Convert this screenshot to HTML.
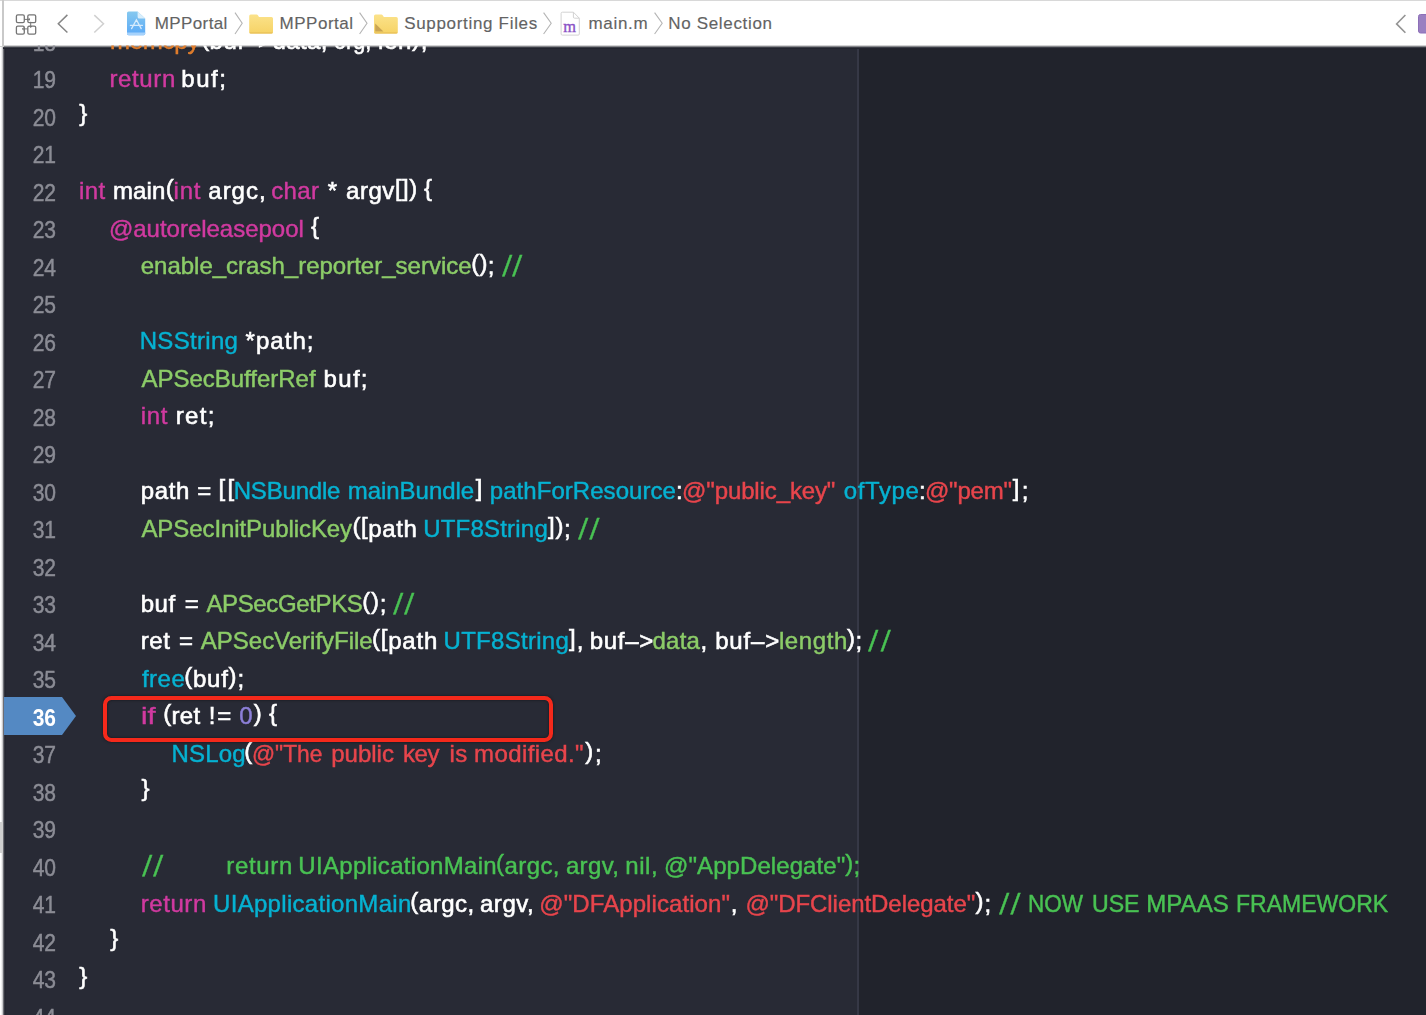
<!DOCTYPE html>
<html><head><meta charset="utf-8"><title>main.m</title>
<style>
html,body{margin:0;padding:0}
body{width:1426px;height:1015px;overflow:hidden;background:#fff;position:relative;font-family:"Liberation Sans",sans-serif}
#ed{position:absolute;left:3px;top:46px;width:1423px;height:969px;background:#282a35;overflow:hidden}
#edl{position:absolute;left:1.2px;top:46px;width:4.6px;height:969px;background:linear-gradient(90deg,#fff 0%,#d4d4d6 28%,#6c6d74 50%,#2e303a 72%,#232530 88%,#282a35 100%)}
#tbb{position:absolute;left:3.4px;top:44px;width:1424px;height:4.6px;background:linear-gradient(180deg,#fff 0%,#ececec 22%,#aeaeb0 42%,#55575f 60%,#272933 78%,#22242e 90%,rgba(34,36,46,0) 100%)}
#edr{position:absolute;left:858.6px;top:46px;width:567px;height:969px;background:#21232c}
#guide{position:absolute;left:857.3px;top:46px;width:1.4px;height:969px;background:#363846}
#lines{position:absolute;left:0;top:0;width:1426px;height:1015px;overflow:hidden;filter:blur(0.45px);clip-path:inset(45.6px 0 0 0)}
.ln{position:absolute;left:0;width:1426px;height:37.5px;line-height:37.5px;font-size:24px;white-space:pre}
.num{position:absolute;left:16.4px;width:40px;text-align:right;color:#8b8c95;font-size:24px;transform:scaleX(.875);transform-origin:100% 50%;top:1.6px;-webkit-text-stroke:0.5px}
.t{position:absolute;top:0;transform-origin:0 50%;-webkit-text-stroke:0.45px}
.k{color:#d13aa0}.g{color:#8ccc68}.c{color:#49c253}.b{color:#06b2d2}.s{color:#e8454c}.n{color:#8c7fd8}.o{color:#e07d2c}.w{color:#fff;-webkit-text-stroke:0.6px}
.br{position:relative;top:-2.7px}.us{position:relative;top:-1.5px}
.cur .num{color:#fff;font-weight:bold;-webkit-text-stroke:0}
#bp{position:absolute;left:3.5px;top:697px;width:72px;height:38px}
#redbox{position:absolute;left:103.2px;top:696px;width:441.4px;height:37.6px;border:4.6px solid #f5291b;border-radius:8.5px;box-shadow:0 0 3px rgba(0,0,0,.5), inset 0 0 3px rgba(0,0,0,.5)}
#tb{position:absolute;left:0;top:0;width:1426px;height:44.5px;background:#fff;border-top:1.5px solid #d8d8d8;box-sizing:border-box}
#tbi{position:absolute;left:0;top:0}
#tbl{position:absolute;left:1.9px;top:0;width:1.7px;height:46.5px;background:#c9c9c9}
#tbl2{position:absolute;left:0;top:45.5px;width:3px;height:1px;background:#cfcfcf}
#lgray{position:absolute;left:0;top:822px;width:2.5px;height:31px;background:#cfcfcf}
.cr{position:absolute;top:12.05px;font-size:17px;line-height:24px;color:#636363;white-space:pre;-webkit-text-stroke:0.15px}
</style></head><body>
<div id="ed"></div><div id="edl"></div><div id="edr"></div><div id="guide"></div><div id="tbb"></div>
<svg id="bp" viewBox="0 0 72 38"><path d="M0 0H58L72 19L58 38H0Z" fill="#5489c3"/></svg>
<div id="lines">
<div class="ln" style="top:22.15px"><span class="num">18</span><span class="t o" style="left:110px;letter-spacing:-0.26px">memcpy</span><span class="t w" style="left:201.2px;letter-spacing:0.42px"><span class="br">(</span>buf–&gt;data, </span><span class="t w" style="left:333.6px;transform:scaleX(0.902)">org, </span><span class="t w" style="left:377.9px;letter-spacing:0.675px">len<span class="br">)</span>;</span></div>
<div class="ln" style="top:59.65px"><span class="num">19</span><span class="t k" style="left:109.4px;letter-spacing:0.65px">return </span><span class="t w" style="left:181.3px;letter-spacing:1.533px">buf;</span></div>
<div class="ln" style="top:97.15px"><span class="num">20</span><span class="t w" style="left:79.3px"><span class="br">}</span></span></div>
<div class="ln" style="top:134.65px"><span class="num">21</span></div>
<div class="ln" style="top:172.15px"><span class="num">22</span><span class="t k" style="left:79.1px;letter-spacing:0.425px">int </span><span class="t w" style="left:112.9px;letter-spacing:0.187px">main<span class="br">(</span></span><span class="t k" style="left:173.5px;letter-spacing:0.825px">int </span><span class="t w" style="left:208.3px;letter-spacing:0.987px">argc, </span><span class="t k" style="left:271.2px;letter-spacing:0.383px">char </span><span class="t w" style="left:327.85px">* </span><span class="t w" style="left:346px;letter-spacing:0.55px">argv<span class="br">[])</span> </span><span class="t w" style="left:423.9px"><span class="br">{</span></span></div>
<div class="ln" style="top:209.65px"><span class="num">23</span><span class="t k" style="left:108.9px;letter-spacing:-0.013px">@autoreleasepool </span><span class="t w" style="left:310.95px"><span class="br">{</span></span></div>
<div class="ln" style="top:247.15px"><span class="num">24</span><span class="t g" style="left:140.7px;letter-spacing:-0.002px">enable<span class="us">_</span>crash<span class="us">_</span>reporter<span class="us">_</span>service</span><span class="t w" style="left:471.2px;letter-spacing:0.3px"><span class="br">()</span>; </span><span class="t c" style="left:502.8px;letter-spacing:1.89px;font-size:29px;transform:skewX(-5deg);top:1px">//</span></div>
<div class="ln" style="top:284.65px"><span class="num">25</span></div>
<div class="ln" style="top:322.15px"><span class="num">26</span><span class="t b" style="left:139.7px;letter-spacing:0.314px">NSString </span><span class="t w" style="left:245.5px;letter-spacing:1.06px">*path;</span></div>
<div class="ln" style="top:359.65px"><span class="num">27</span><span class="t g" style="left:141.45px;letter-spacing:-0.015px">APSecBufferRef </span><span class="t w" style="left:323.6px;letter-spacing:1.3px">buf;</span></div>
<div class="ln" style="top:397.15px"><span class="num">28</span><span class="t k" style="left:140.7px;letter-spacing:0.725px">int </span><span class="t w" style="left:175.8px;letter-spacing:1.333px">ret;</span></div>
<div class="ln" style="top:434.65px"><span class="num">29</span></div>
<div class="ln" style="top:472.15px"><span class="num">30</span><span class="t w" style="left:140.7px;letter-spacing:0.65px">path </span><span class="t w" style="left:197.35px">= </span><span class="t w" style="left:218.45px;letter-spacing:2.3px"><span class="br">[[</span></span><span class="t b" style="left:233.7px;letter-spacing:-0.186px">NSBundle </span><span class="t b" style="left:347.7px;letter-spacing:-0.028px">mainBundle</span><span class="t w" style="left:475.77px"><span class="br">]</span> </span><span class="t b" style="left:489.8px;letter-spacing:0.046px">pathForResource</span><span class="t w" style="left:675.97px">:</span><span class="t s" style="left:682.1px;letter-spacing:-0.129px">@"public<span class="us">_</span>key" </span><span class="t b" style="left:843.7px;letter-spacing:0.64px">ofType</span><span class="t w" style="left:918.93px">:</span><span class="t s" style="left:924.9px;letter-spacing:-0.18px">@"pem"</span><span class="t w" style="left:1012.75px;letter-spacing:2.4px"><span class="br">]</span>;</span></div>
<div class="ln" style="top:509.65px"><span class="num">31</span><span class="t g" style="left:141.45px;letter-spacing:-0.085px">APSecInitPublicKey</span><span class="t w" style="left:352.5px;letter-spacing:0.57px"><span class="br">([</span>path </span><span class="t b" style="left:423.15px;letter-spacing:0.211px">UTF8String</span><span class="t w" style="left:548.05px;letter-spacing:0.7px"><span class="br">])</span>; </span><span class="t c" style="left:578.7px;letter-spacing:3.29px;font-size:29px;transform:skewX(-5deg);top:1px">//</span></div>
<div class="ln" style="top:547.15px"><span class="num">32</span></div>
<div class="ln" style="top:584.65px"><span class="num">33</span><span class="t w" style="left:140.7px;letter-spacing:0.55px">buf </span><span class="t w" style="left:184.7px">= </span><span class="t g" style="left:206.45px;letter-spacing:-0.365px">APSecGetPKS</span><span class="t w" style="left:362.3px;letter-spacing:0.75px"><span class="br">()</span>; </span><span class="t c" style="left:394.3px;letter-spacing:2.99px;font-size:29px;transform:skewX(-5deg);top:1px">//</span></div>
<div class="ln" style="top:622.15px"><span class="num">34</span><span class="t w" style="left:140.7px;letter-spacing:0.625px">ret </span><span class="t w" style="left:179.1px">= </span><span class="t g" style="left:200.85px;letter-spacing:-0.018px">APSecVerifyFile</span><span class="t w" style="left:372.1px;letter-spacing:0.75px"><span class="br">([</span>path </span><span class="t b" style="left:443.55px;letter-spacing:0.278px">UTF8String</span><span class="t w" style="left:569.05px;letter-spacing:1px"><span class="br">]</span>, </span><span class="t w" style="left:589.7px;letter-spacing:0.7px">buf–&gt;</span><span class="t g" style="left:652.5px;letter-spacing:0.25px">data</span><span class="t w" style="left:700.58px">, </span><span class="t w" style="left:715.2px;letter-spacing:0.825px">buf–&gt;</span><span class="t g" style="left:778.9px;letter-spacing:0.59px">length</span><span class="t w" style="left:846.95px;letter-spacing:0.45px"><span class="br">)</span>; </span><span class="t c" style="left:869.3px;letter-spacing:4.49px;font-size:29px;transform:skewX(-5deg);top:1px">//</span></div>
<div class="ln" style="top:659.65px"><span class="num">35</span><span class="t b" style="left:141.95px;letter-spacing:0.5px">free</span><span class="t w" style="left:184.2px;letter-spacing:0.76px"><span class="br">(</span>buf<span class="br">)</span>;</span></div>
<div class="ln cur" style="top:697.15px"><span class="num">36</span><span class="t k" style="left:140.7px;transform:scaleX(1.2)">if </span><span class="t w" style="left:163.2px;letter-spacing:0.35px"><span class="br">(</span>ret </span><span class="t w" style="left:208.65px;letter-spacing:1.85px">!= </span><span class="t n" style="left:239.35px">0</span><span class="t w" style="left:253.82px"><span class="br">)</span> </span><span class="t w" style="left:269.05px"><span class="br">{</span></span></div>
<div class="ln" style="top:734.65px"><span class="num">37</span><span class="t b" style="left:171.4px;letter-spacing:0.212px">NSLog</span><span class="t w" style="left:244.32px"><span class="br">(</span></span><span class="t s" style="left:252.2px;transform:scaleX(0.9488)">@"The </span><span class="t s" style="left:331.2px">public </span><span class="t s" style="left:403px;letter-spacing:-0.475px">key </span><span class="t s" style="left:449.6px;letter-spacing:0.2px">is </span><span class="t s" style="left:474px;letter-spacing:0.411px">modified."</span><span class="t w" style="left:585.35px;letter-spacing:1.75px"><span class="br">)</span>;</span></div>
<div class="ln" style="top:772.15px"><span class="num">38</span><span class="t w" style="left:141.5px"><span class="br">}</span></span></div>
<div class="ln" style="top:809.65px"><span class="num">39</span></div>
<div class="ln" style="top:847.15px"><span class="num">40</span><span class="t c" style="left:142.7px;letter-spacing:2.99px;font-size:29px;transform:skewX(-5deg);top:1px">// </span><span class="t c" style="left:226.3px;letter-spacing:0.65px">return </span><span class="t c" style="left:298.35px;letter-spacing:0.306px">UIApplicationMain</span><span class="t c" style="left:496.1px;letter-spacing:0.41px"><span class="br">(</span>argc, </span><span class="t c" style="left:565.9px;letter-spacing:0.35px">argv, </span><span class="t c" style="left:625.2px;letter-spacing:0.6px">nil, </span><span class="t c" style="left:664px;letter-spacing:0.083px">@"AppDelegate"<span class="br">)</span>;</span></div>
<div class="ln" style="top:884.65px"><span class="num">41</span><span class="t k" style="left:140.7px;letter-spacing:0.57px">return </span><span class="t b" style="left:213.05px;letter-spacing:0.3px">UIApplicationMain</span><span class="t w" style="left:410.3px;letter-spacing:0.51px"><span class="br">(</span>argc, </span><span class="t w" style="left:480px;letter-spacing:0.525px">argv, </span><span class="t s" style="left:539.3px;letter-spacing:0.08px">@"DFApplication"</span><span class="t w" style="left:730.72px">, </span><span class="t s" style="left:745.4px;letter-spacing:-0.053px">@"DFClientDelegate"</span><span class="t w" style="left:975.45px;letter-spacing:1.15px"><span class="br">)</span>; </span><span class="t c" style="left:999.7px;letter-spacing:3.29px;font-size:29px;transform:skewX(-5deg);top:1px">// </span><span class="t c" style="left:1027.52px;transform:scaleX(0.9381)">NOW </span><span class="t c" style="left:1092.11px;transform:scaleX(0.9634)">USE </span><span class="t c" style="left:1146.2px;letter-spacing:0.088px">MPAAS </span><span class="t c" style="left:1235.98px;transform:scaleX(0.9587)">FRAMEWORK</span></div>
<div class="ln" style="top:922.15px"><span class="num">42</span><span class="t w" style="left:110.3px"><span class="br">}</span></span></div>
<div class="ln" style="top:959.65px"><span class="num">43</span><span class="t w" style="left:79.3px"><span class="br">}</span></span></div>
<div class="ln" style="top:997.15px"><span class="num">44</span></div>
</div>
<div id="redbox"></div>
<div id="tb"></div><div id="tbl"></div><div id="tbl2"></div><div id="lgray"></div>
<svg id="tbi" width="1426" height="46" viewBox="0 0 1426 46">
<defs>
<linearGradient id="gp" x1="0" y1="0" x2="0" y2="1"><stop offset="0" stop-color="#86c9ef"/><stop offset="1" stop-color="#5aa9f7"/></linearGradient>
<linearGradient id="gf" x1="0" y1="0" x2="0" y2="1"><stop offset="0" stop-color="#fbe28a"/><stop offset="1" stop-color="#f6d366"/></linearGradient>
</defs>
<g fill="none" stroke="#757575" stroke-width="1.3">
<rect x="16.4" y="14.9" width="7.9" height="7.8" rx="1.4"/><rect x="27.8" y="14.9" width="7.9" height="7.8" rx="1.4"/>
<rect x="16.4" y="26.1" width="7.9" height="8.1" rx="1.4"/><rect x="27.8" y="26.1" width="7.9" height="8.1" rx="1.4"/>
<path d="M24.6 19.4H30M28.6 18.2L30 19.4L28.6 20.6M30.7 21.8V27.4M29.5 26L30.7 27.4L31.9 26M27.4 28.9H22.4M23.8 27.7L22.4 28.9L23.8 30.1" stroke-width="1"/>
</g>
<path d="M67.4 14.9L58.3 23.7L67.4 32.5" fill="none" stroke="#868686" stroke-width="1.5"/>
<path d="M94.3 15.1L103.5 23.7L94.3 32.5" fill="none" stroke="#d0d0d0" stroke-width="1.5"/>
<path d="M128.6 11.4H137.6L145.2 18.6V33.6Q145.2 35.2 143.6 35.2H128.6Q127 35.2 127 33.6V13Q127 11.4 128.6 11.4Z" fill="url(#gp)"/>
<path d="M137.6 11.4V17Q137.6 18.6 139.2 18.6H145.2Z" fill="#d9eefb"/>
<path d="M131.6 28.6L136.4 19.8L141.2 28.6M130.4 25.4H142.4" fill="none" stroke="#e9f5fe" stroke-width="1.3" stroke-linecap="round" opacity=".85"/>
<path d="M127 32.6H145.2V33.6Q145.2 35.2 143.6 35.2H128.6Q127 35.2 127 33.6Z" fill="#a6d2fb"/>
<g id="fold1"><path d="M249.2 16Q249.2 14.5 250.7 14.5H256.6Q257.4 14.5 257.9 15.2L259 16.9H271.5Q273 16.9 273 18.4V32Q273 33.5 271.5 33.5H250.7Q249.2 33.5 249.2 32Z" fill="url(#gf)"/><path d="M249.4 32.4Q249.6 33.5 250.7 33.5H271.5Q272.6 33.5 272.8 32.4Z" fill="#e3b950"/></g>
<g transform="translate(124.8 0)"><path d="M249.2 16Q249.2 14.5 250.7 14.5H256.6Q257.4 14.5 257.9 15.2L259 16.9H271.5Q273 16.9 273 18.4V32Q273 33.5 271.5 33.5H250.7Q249.2 33.5 249.2 32Z" fill="url(#gf)"/><path d="M249.4 32.4Q249.6 33.5 250.7 33.5H271.5Q272.6 33.5 272.8 32.4Z" fill="#e3b950"/><path d="M250.4 23.6V31.4H258.6Z" fill="#c9a453"/></g>
<g fill="none" stroke="#b4b4b4" stroke-width="1.1"><path d="M235 12.6L242.2 23.2L235 34"/><path d="M359.6 12.6L367 23.2L359.6 34"/><path d="M543.6 12.6L551.2 23.2L543.6 34"/><path d="M654.6 12.6L662.2 23.2L654.6 34"/></g>
<path d="M562.4 12.2H573.4L579.3 18.2V34Q579.3 35.1 578.2 35.1H562.4Q561.1 35.1 561.1 34V13.4Q561.1 12.2 562.4 12.2Z" fill="#fff" stroke="#d2d2d2" stroke-width="1"/>
<path d="M573.4 12.2V17Q573.4 18.2 574.6 18.2H579.3" fill="none" stroke="#d2d2d2" stroke-width="1"/>
<text x="563.2" y="31.9" font-family="'Liberation Serif',serif" font-size="16.4" fill="#8a52c6" stroke="#8a52c6" stroke-width=".35">m</text>
<path d="M1405.4 15L1396.6 23.9L1405.4 32.8" fill="none" stroke="#949494" stroke-width="1.6"/>
<rect x="1418.5" y="14.5" width="12" height="18.5" rx="2" fill="#9a80c1" stroke="#8d6fb8" stroke-width="1"/>
</svg>
<div id="crumbs">
<span class="cr" style="left:154.7px;letter-spacing:0.4px">MPPortal</span>
<span class="cr" style="left:279.6px;letter-spacing:0.514px">MPPortal</span>
<span class="cr" style="left:404.2px;letter-spacing:0.68px">Supporting Files</span>
<span class="cr" style="left:588.4px;letter-spacing:0.72px">main.m</span>
<span class="cr" style="left:668.3px;letter-spacing:0.664px">No Selection</span>
</div>
</body></html>
